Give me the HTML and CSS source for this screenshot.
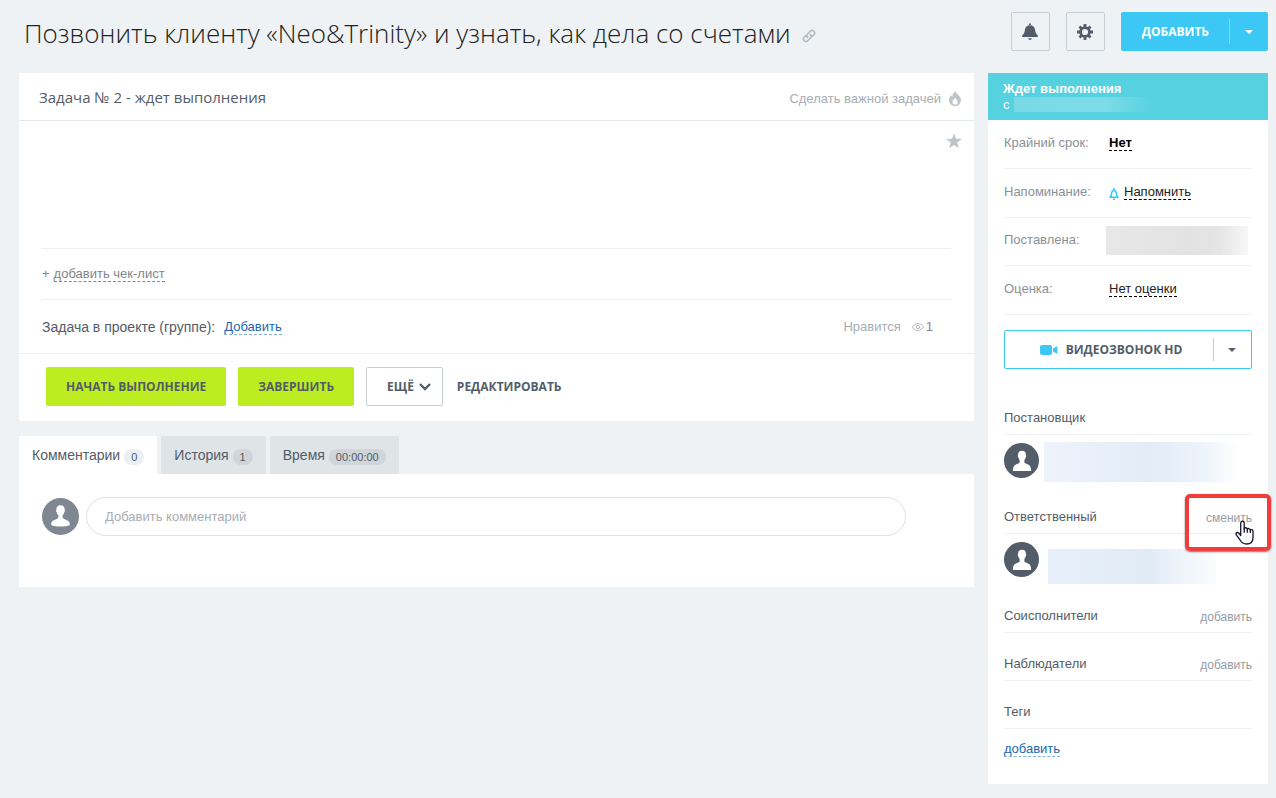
FILE: index.html
```html
<!DOCTYPE html>
<html lang="ru">
<head>
<meta charset="utf-8">
<title>Позвонить клиенту «Neo&amp;Trinity» и узнать, как дела со счетами</title>
<link rel="stylesheet" href="styles.css">
</head>
<body>
<svg class="sprite" aria-hidden="true">
  <symbol id="person" viewBox="0 0 35 35">
    <path d="M18 7.800c-2.800 0-4 1.600-3.900 4.200-.6.300-.3 2.200.3 2.600.2 1.200.7 2 1.200 2.500v2.600l-4.600 2.200C9.300 23 9 25.500 8.800 28.100h18.400c-.2-2.600-.5-5.100-2.200-6.200l-4.600-2.200v-2.600c.5-.5 1-1.300 1.200-2.500.6-.4.900-2.300.3-2.600.1-2.600-1.100-4.200-3.900-4.200z" fill="#fff"/>
  </symbol>
</svg>
<header class="topbar">
  <div class="heading">
    <h1 class="title">Позвонить клиенту «Neo&amp;Trinity» и узнать, как дела со счетами</h1>
    <a class="icon-link" href="#" aria-label="Ссылка на задачу">
      <svg width="14" height="14" viewBox="0 0 14 14" fill="none" stroke="#b7bdc3" stroke-width="1.700" stroke-linecap="round"><path d="M5.600 8.400A2.500 2.500 0 0 1 5.600 5L8.600 2A2.500 2.500 0 0 1 12.100 5.500L10 7.600"/><path d="M8.400 5.600A2.500 2.500 0 0 1 8.400 9L5.400 12A2.500 2.500 0 0 1 1.900 8.500L4 6.400"/></svg>
    </a>
  </div>
  <div class="tools">
    <button class="btn square" aria-label="Уведомления">
      <svg width="16" height="18" viewBox="0 0 16 18" fill="#535c69"><circle cx="8" cy="1.300" r="1"/><path d="M8 2.300c3 0 4.600 1.800 5 4.300.4 2.800 1 4.200 2.800 6v1.400H.2v-1.400c1.800-1.800 2.400-3.200 2.800-6C3.400 4.100 5 2.300 8 2.300z"/><path d="M6.300 15.300h3.400a1.700 1.700 0 0 1-3.400 0z"/></svg>
    </button>
    <button class="btn square" aria-label="Настройки">
      <svg width="16" height="16" viewBox="0 0 16 16"><g stroke="#535c69" stroke-width="2.800"><path d="M8 0v16M0 8h16M2.500 2.500l11 11M13.500 2.500l-11 11"/></g><circle cx="8" cy="8" r="5.800" fill="#535c69"/><circle cx="8" cy="8" r="3.100" fill="#eef2f4"/></svg>
    </button>
    <div class="split primary">
      <button class="split-main">ДОБАВИТЬ</button>
      <button class="split-menu" aria-label="Другие варианты"><span class="caret"></span></button>
    </div>
  </div>
</header>

<div class="layout">
  <main>
    <section class="card">
      <div class="card-head">
        <h2 class="card-title">Задача № 2 - ждет выполнения</h2>
        <button class="plain important">Сделать важной задачей
          <svg width="12" height="15" viewBox="0 0 12 15" fill="#bfc4cb" fill-rule="evenodd"><path d="M6.300 0c.2 3 5.700 4.700 5.700 9.300A5.800 5.800 0 0 1 6 15 5.800 5.800 0 0 1 0 9.300C0 7 1 5.400 2.200 3.900c.1 1 .4 1.700 1 2C3.300 3.500 4.800 2 6.300 0zM6.200 6.300C5.900 8 3.500 8.700 3.500 11a2.600 2.600 0 0 0 5.200 0c0-1.900-2.300-2.700-2.500-4.700z"/></svg>
        </button>
      </div>
      <div class="card-body">
        <div class="description">
          <button class="plain star" aria-label="В избранное">
            <svg width="16" height="16" viewBox="0 0 16 16" fill="#bfc4cb"><path d="M8 .3l2 5.400 5.800.2-4.600 3.600 1.600 5.600L8 11.900l-4.800 3.200 1.600-5.600L.2 5.900 6 5.700z"/></svg>
          </button>
        </div>
        <div class="checklist"><span class="plus">+</span><a class="dashed grey" href="#">добавить чек-лист</a></div>
        <div class="project">
          <span>Задача в проекте (группе):</span>
          <a class="dashed blue" href="#">Добавить</a>
          <div class="stats"><button class="plain">Нравится</button>
            <span class="views"><svg width="12" height="8" viewBox="0 0 12 8" fill="none" stroke="#b2b8be"><path d="M.5 4C3-.6 9-.6 11.500 4 9 8.600 3 8.600.5 4z"/><circle cx="6" cy="4" r="1.700"/></svg>1</span>
          </div>
        </div>
      </div>
      <div class="actions">
        <button class="btn green">НАЧАТЬ ВЫПОЛНЕНИЕ</button>
        <button class="btn green">ЗАВЕРШИТЬ</button>
        <button class="btn outline">ЕЩЁ <svg width="12" height="8" viewBox="0 0 12 8" fill="none" stroke="#535c69" stroke-width="2.400"><path d="M1 1l5 5 5-5"/></svg></button>
        <button class="btn text">РЕДАКТИРОВАТЬ</button>
      </div>
    </section>

    <nav class="tabs">
      <button class="tab active">Комментарии <span class="count">0</span></button>
      <button class="tab">История <span class="count">1</span></button>
      <button class="tab">Время <span class="count">00:00:00</span></button>
    </nav>
    <section class="comments">
      <svg class="avatar grey-bg" viewBox="0 0 36 36"><path d="M18 7c-3 0-4.200 2-4 4.600-.5.500-.2 2 .4 2.300.2 1.300.9 2.500 1.500 3v2.200c-.6 1.600-5.600 2-6.600 4.400-.4.900-.3 1.700-.3 3 4 1.800 14 1.800 18 0 0-1.300.1-2.100-.3-3-1-2.400-6-2.800-6.600-4.400v-2.200c.6-.5 1.300-1.700 1.500-3 .6-.3.900-1.800.4-2.300.2-2.600-1-4.600-4-4.600z" fill="#fff"/></svg>
      <input class="comment-input" type="text" placeholder="Добавить комментарий" aria-label="Добавить комментарий">
    </section>
  </main>

  <aside class="side">
    <div class="status"><strong>Ждет выполнения</strong><span class="since">с <span class="mask mask-date"></span></span></div>
    <div class="side-body">
      <dl class="props">
        <div class="prop"><dt>Крайний срок:</dt><dd><a class="dashed black bold" href="#">Нет</a></dd></div>
        <div class="prop"><dt>Напоминание:</dt><dd><svg class="bell" width="10" height="12" viewBox="0 0 10 12" fill="none" stroke="#2fc6f6" stroke-width="1.500"><path d="M5 0v2M.4 9.200h9.200M1.300 9C2.200 8 2.400 7.200 2.600 5.500 2.800 3.500 3.600 2.500 5 2.500s2.200 1 2.400 3C7.600 7.200 7.800 8 8.700 9M4 11.200h2"/></svg><a class="dashed black" href="#">Напомнить</a></dd></div>
        <div class="prop compact"><dt>Поставлена:</dt><dd class="masked"><span class="mask mask-created"></span></dd></div>
        <div class="prop"><dt>Оценка:</dt><dd><a class="dashed black" href="#">Нет оценки</a></dd></div>
      </dl>
      <div class="split video">
        <button class="split-main"><svg width="18" height="10" viewBox="0 0 18 10" fill="#3bc8f5"><rect width="12" height="10" rx="2"/><path d="M13 3.500L17.400 1v8L13 6.500z"/></svg>ВИДЕОЗВОНОК HD</button>
        <button class="split-menu" aria-label="Варианты звонка"><span class="caret"></span></button>
      </div>
      <div class="group-head"><h3>Постановщик</h3></div>
      <div class="person"><svg class="avatar small"><use href="#person"/></svg><span class="mask mask-author"></span></div>
      <div class="group-head"><h3>Ответственный</h3>
        <span class="change"><button class="plain">сменить</button>
          <span class="highlight"></span>
          <svg class="cursor" width="19" height="26" viewBox="0 0 19 26" fill="#fff" stroke="#14142b" stroke-width="1.300" stroke-linejoin="round"><path d="M5.700 15.500V3.200c0-2.900 3.500-2.900 3.500 0v5.600c.3-1.500 3-1.500 3.100.5.500-1.200 2.900-1 3 .7.600-.8 2.700-.5 2.700 1.200v6.300c0 4-2.500 6.500-6.500 6.500-3.200 0-5-1.500-6.300-3.800L1.300 14.800c-1-2 1.200-3.100 2.500-1.600z"/><path d="M9.200 8.500v4.300M12.300 9.300v3.500M15.300 10v3" fill="none"/></svg>
        </span>
      </div>
      <div class="person"><svg class="avatar small"><use href="#person"/></svg><span class="mask mask-owner"></span></div>
      <div class="group-head"><h3>Соисполнители</h3><button class="plain">добавить</button></div>
      <div class="group-head"><h3>Наблюдатели</h3><button class="plain">добавить</button></div>
      <div class="group-head"><h3>Теги</h3></div>
      <div class="tags"><a class="dashed blue" href="#">добавить</a></div>
    </div>
  </aside>
</div>
</body>
</html>
```
FILE: styles.css
```css
* { box-sizing: border-box; }
body {
  margin: 0;
  background: #eef2f4;
  color: #535c69;
  font: 13px/16px "Liberation Sans", Arial, sans-serif;
}
h1, h2, h3, dl, dd { margin: 0; font-weight: normal; }
a { text-decoration: none; color: inherit; }
svg { display: block; flex: none; }
button { border: 0; background: none; padding: 0; font: inherit; color: inherit; cursor: pointer; }
.sprite { position: absolute; width: 0; height: 0; }

.topbar { display: flex; justify-content: space-between; padding: 12px 8px 20px 24px; }
.heading { display: flex; align-items: center; gap: 11px; height: 41px; }
.title { font: 300 26px/36px "Open Sans", sans-serif; color: #222; }
.icon-link { padding-top: 6px; }
.tools { display: flex; gap: 16px; height: 39px; }
.btn {
  display: flex; align-items: center; justify-content: center;
  height: 39px; padding: 0 20px; border-radius: 2px;
  font: bold 12px/16px "Open Sans", sans-serif; color: #535c69;
}
.square { width: 39px; padding: 0; border: 1px solid #c6cdd3; }

.split { display: flex; height: 39px; border-radius: 2px; font: bold 12px/16px "Open Sans", sans-serif; }
.split-main { flex: 1; display: flex; align-items: center; justify-content: center; gap: 8px; }
.split-menu { position: relative; width: 39px; display: flex; align-items: center; justify-content: center; }
.split-menu::before { content: ""; position: absolute; left: 0; top: 7px; bottom: 7px; border-left: 1px solid #c6cdd3; }
.caret { border: 4px solid transparent; border-top-color: currentColor; border-bottom: 0; }
.primary { background: #3bc8f5; color: #fff; }
.primary .split-main { padding: 0 20px 0 21px; }
.primary .split-menu::before { border-color: #7cdbfa; }
.video { border: 1px solid #3bc8f5; margin: 15px 0 18px; }
.video .split-main { padding-left: 4px; }
.video .split-menu { width: 38px; }

.layout { display: grid; grid-template-columns: minmax(0, 1fr) 280px; gap: 14px; align-items: start; padding: 0 8px 14px 19px; }
.card, .comments, .side { background: #fff; }
.card-head { display: flex; justify-content: space-between; align-items: center; height: 48px; padding: 0 13px 0 20px; border-bottom: 1px solid #e6e9eb; }
.card-title { font: 15px/20px "Open Sans", sans-serif; }
.plain { color: #959ca4; }
.important { display: flex; align-items: center; gap: 8px; color: #a8adb4; padding-top: 4px; }
.card-body { padding: 0 23px; }
.description { display: flex; justify-content: flex-end; align-items: flex-start; height: 128px; border-bottom: 1px solid #edeff0; }
.star { margin: 12px -11px 0 0; }
.checklist { display: flex; gap: 4px; align-items: center; height: 51px; border-bottom: 1px solid #edeff0; color: #80868e; }
.project { display: flex; align-items: center; gap: 9px; height: 53px; font-size: 14px; }
.project .dashed, .stats { font-size: 13px; }
.stats { display: flex; gap: 11px; margin: 0 18px 0 auto; }
.stats .plain { color: #a8adb4; }
.views { display: flex; align-items: center; gap: 2px; color: #80868e; }
.dashed { line-height: 15px; border-bottom: 1px dashed currentColor; }
.grey { color: #80868e; }
.blue { color: #2067b0; border-color: #86b0d8; }
.black { color: #222; border-color: #000; }
.bold { font-weight: bold; color: #000; }
.actions { display: flex; gap: 12px; padding: 13px 27px 15px; border-top: 1px solid #edeff0; }
.green { background: #bbed21; }
.outline { gap: 5px; padding: 0 11px 0 20px; border: 1px solid #c6cdd3; }
.text { padding: 0 2px; }

.tabs { display: flex; gap: 4px; padding-top: 15px; }
.tab { display: flex; align-items: center; gap: 4px; height: 38px; padding: 0 13px; border-radius: 2px 2px 0 0; background: #dfe4e7; font-size: 14px; }
.tab.active { background: #fff; }
.count { margin-top: 4px; padding: 0 7px; border-radius: 8px; background: #cfd5d8; font-size: 11px; }
.active .count { background: #eaf0f4; }
.comments { display: flex; align-items: center; gap: 7px; padding: 23px 68px 51px 23px; }
.avatar { width: 37px; height: 37px; border-radius: 50%; background: #535c69; }
.avatar.small { width: 35px; height: 35px; }
.avatar.grey-bg { background: #7f8892; }
.comment-input { flex: 1; min-width: 0; height: 39px; padding: 0 18px; border: 1px solid #dfe1e3; border-radius: 20px; background: #fff; font: inherit; color: #535c69; }
.comment-input::placeholder { color: #a8adb4; opacity: 1; }

.status { display: flex; flex-direction: column; height: 47px; padding: 8px 15px; background: #56d1e0; color: #fff; line-height: 16px; }
.since { display: flex; align-items: center; gap: 4px; line-height: 15px; }
.mask { display: block; }
.mask-date { width: 140px; height: 15px; background: linear-gradient(90deg, #79d9e7, #7ddce7 65%, #56d1e0); }
.side-body { padding: 0 16px; }
.prop { display: flex; align-items: center; height: 49px; padding-bottom: 3px; border-bottom: 1px solid #edeff0; }
.prop.compact { height: 48px; }
.prop dt { width: 105px; color: #8a9097; }
.prop dd { display: flex; align-items: center; gap: 5px; }
.bell { margin-top: 4px; }
.prop .masked { margin-left: -3px; }
.mask-created { width: 142px; height: 29px; background: linear-gradient(90deg, #e8e8e8, #e2e2e2 60%, #e5e5e5 80%, #f7f7f7); }
.group-head { display: flex; justify-content: space-between; align-items: flex-end; height: 48px; padding-bottom: 7px; border-bottom: 1px solid #edeff0; }
.group-head h3 { font-size: 13px; line-height: 18px; }
.group-head .plain { font-size: 12px; }
.person { display: flex; gap: 5px; height: 51px; padding-top: 8px; }
.person .mask { height: 40px; margin-top: -1px; }
.mask-author { width: 196px; background: linear-gradient(90deg, #eef3fb, #e2ecf7 54%, #edf3fb 80%, #fff); }
.person .mask-owner { width: 168px; height: 35px; margin: 7px 0 0 4px; background: linear-gradient(90deg, #e6eff9, #e1ebf6 60%, #fbfcfe); }
.change { position: relative; }
.highlight { position: absolute; top: -16px; left: -21px; right: -19px; height: 57px; border: 4px solid #f13c3c; border-radius: 5px; box-shadow: 0 1px 2px #0008; pointer-events: none; }
.cursor { position: absolute; right: -2px; top: 10px; pointer-events: none; }
.tags { height: 55px; padding-top: 12px; }
```
